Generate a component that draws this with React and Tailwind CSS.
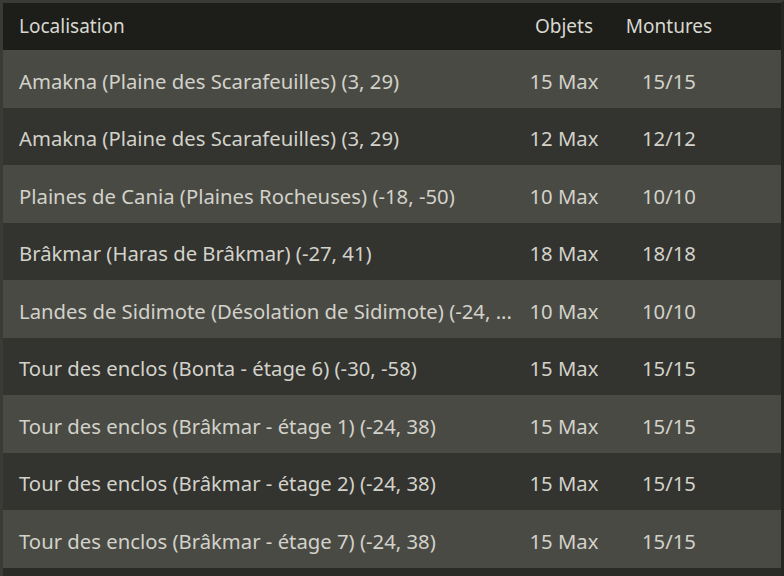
import React from "react";

const rows = [
  ["Amakna (Plaine des Scarafeuilles) (3, 29)", "15 Max", "15/15"],
  ["Amakna (Plaine des Scarafeuilles) (3, 29)", "12 Max", "12/12"],
  ["Plaines de Cania (Plaines Rocheuses) (-18, -50)", "10 Max", "10/10"],
  ["Brâkmar (Haras de Brâkmar) (-27, 41)", "18 Max", "18/18"],
  ["Landes de Sidimote (Désolation de Sidimote) (-24, ...", "10 Max", "10/10"],
  ["Tour des enclos (Bonta - étage 6) (-30, -58)", "15 Max", "15/15"],
  ["Tour des enclos (Brâkmar - étage 1) (-24, 38)", "15 Max", "15/15"],
  ["Tour des enclos (Brâkmar - étage 2) (-24, 38)", "15 Max", "15/15"],
  ["Tour des enclos (Brâkmar - étage 7) (-24, 38)", "15 Max", "15/15"],
];

export default function App() {
  return (
    <div
      className="w-[784px] h-[576px] overflow-hidden bg-[#2a2a26] border-l-[3px] border-t-[3px] border-r-[3px] border-l-[#3a3a36] border-t-[#3a3a36] border-r-[#262622] flex flex-col text-[#d2d2ca]"
      style={{ fontFamily: '"Noto Sans", "Open Sans", sans-serif' }}
    >
      <div className="h-[47px] shrink-0 flex items-center bg-[#1d1d19] text-[19px] text-[#d8d8d0]">
        <div className="w-[513px] pl-[16px]">Localisation</div>
        <div className="w-[96px] text-center">Objets</div>
        <div className="w-[114px] text-center">Montures</div>
      </div>
      {rows.map((r, i) => (
        <div
          key={i}
          className={`h-[57.5px] shrink-0 flex items-center pt-[4px] text-[20.3px] ${i % 2 === 0 ? "bg-[#4a4a45]" : "bg-[#33332f]"}`}
        >
          <div className="w-[513px] pl-[16px] whitespace-nowrap">{r[0]}</div>
          <div className="w-[96px] text-center">{r[1]}</div>
          <div className="w-[114px] text-center">{r[2]}</div>
        </div>
      ))}
    </div>
  );
}
